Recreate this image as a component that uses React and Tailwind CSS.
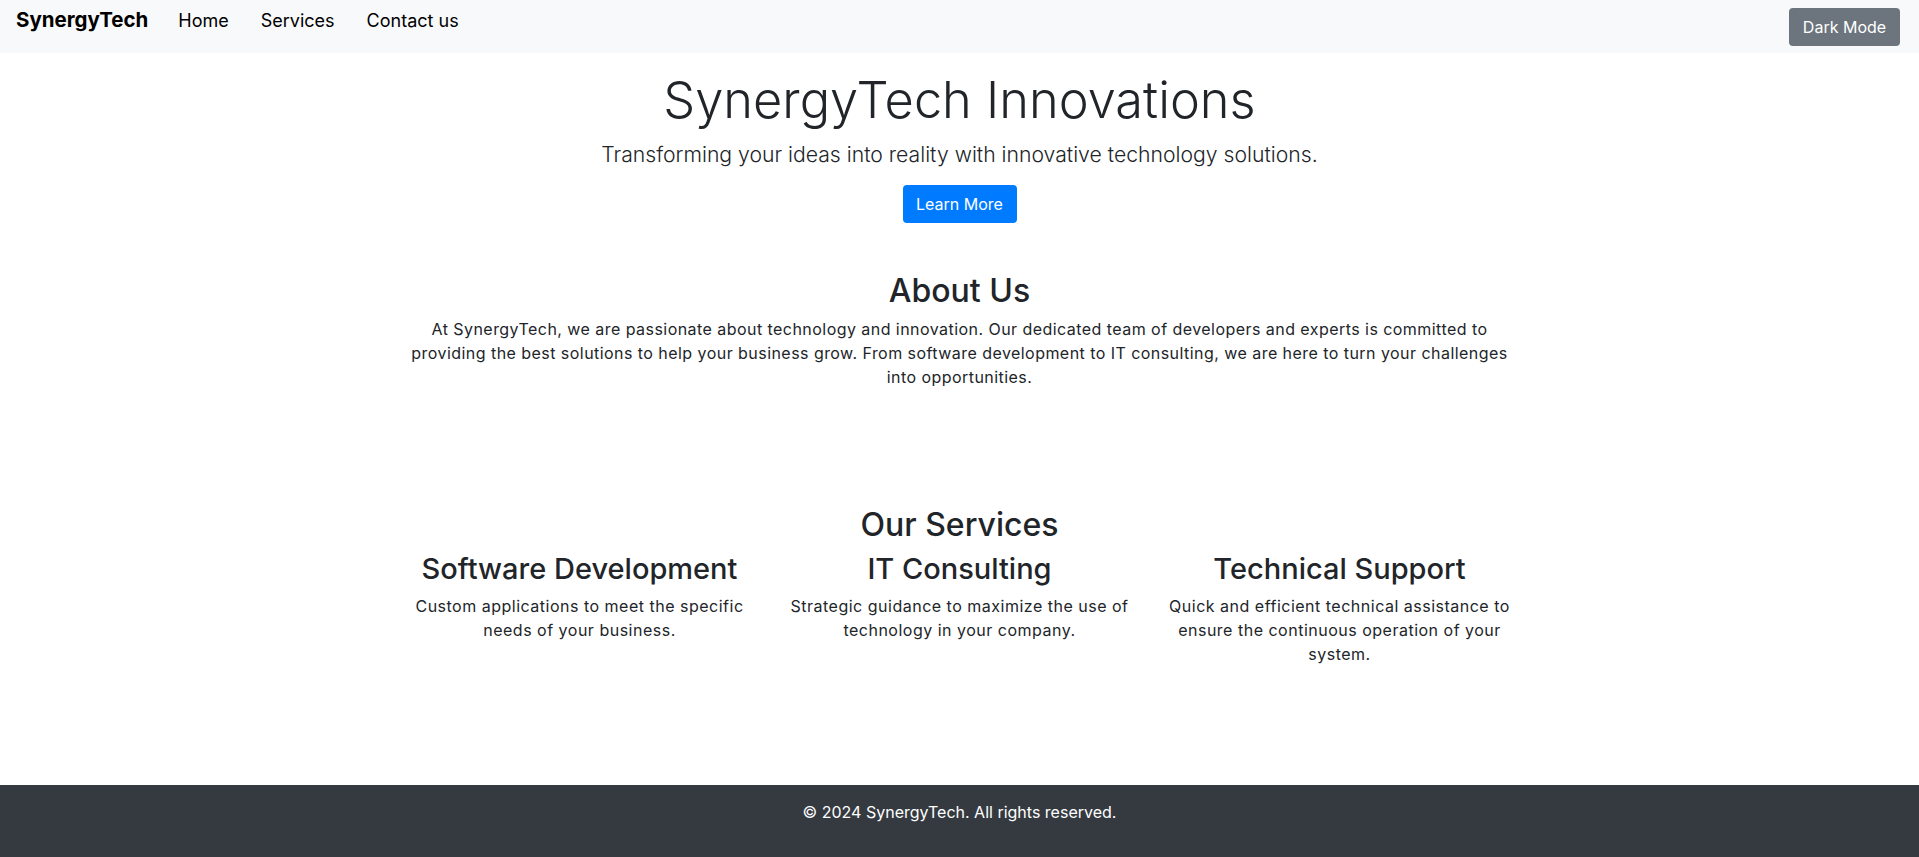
const services = [
    {
        title: 'Software Development',
        text: 'Custom applications to meet the specific needs of your business.',
    },
    {
        title: 'IT Consulting',
        text: 'Strategic guidance to maximize the use of technology in your company.',
    },
    {
        title: 'Technical Support',
        text: 'Quick and efficient technical assistance to ensure the continuous operation of your system.',
    },
]

const App = () => (
    <div className="min-h-screen flex flex-col bg-white text-[#212529] font-['Inter',sans-serif]">
        <nav className="h-[53px] bg-[#f8f9fa] flex items-start justify-between pl-4 pr-[19px]">
            <div className="flex items-center pt-[5px]">
                <a href="#" className="text-[20.5px] leading-[30px] font-bold text-black mr-[30px]">SynergyTech</a>
                <ul className="flex items-center gap-[32px] text-[18px] leading-[27px] text-black">
                    <li><a href="#">Home</a></li>
                    <li><a href="#">Services</a></li>
                    <li><a href="#">Contact us</a></li>
                </ul>
            </div>
            <button className="mt-2 h-[38px] w-[111px] rounded bg-[#6c757d] text-white text-base">Dark Mode</button>
        </nav>

        <main className="flex-1">
            <section className="text-center pt-[13px]">
                <h1 className="text-[50.5px] leading-[68px] font-light">SynergyTech Innovations</h1>
                <p className="mt-[5px] text-[21.2px] leading-[30px] font-light">
                    Transforming your ideas into reality with innovative technology solutions.
                </p>
                <button className="mt-4 h-[38px] w-[114px] rounded bg-[#007bff] text-white text-base">Learn More</button>
            </section>

            <section className="max-w-[1140px] mx-auto px-[15px] text-center mt-[49px]">
                <h2 className="text-[32px] leading-[38px] font-medium">About Us</h2>
                <p className="mt-[7px] text-base leading-6 tracking-[0.45px]">
                    At SynergyTech, we are passionate about technology and innovation. Our dedicated team of developers and experts is committed to providing the best solutions to help your business grow. From software development to IT consulting, we are here to turn your challenges into opportunities.
                </p>
            </section>

            <section className="max-w-[1140px] mx-auto px-[15px] text-center mt-[117px]">
                <h2 className="text-[32px] leading-[38px] font-medium">Our Services</h2>
                <div className="grid grid-cols-3 -mx-[15px] mt-2">
                    {services.map((s) => (
                        <div key={s.title} className="px-[15px]">
                            <h3 className="text-[29px] leading-[34px] font-medium">{s.title}</h3>
                            <p className="mt-2 text-base leading-6 tracking-[0.5px]">{s.text}</p>
                        </div>
                    ))}
                </div>
            </section>
        </main>

        <footer className="h-[72px] bg-[#343a40] text-white text-center pt-[15px] text-base leading-6">
            © 2024 SynergyTech. All rights reserved.
        </footer>
    </div>
)

export default App
